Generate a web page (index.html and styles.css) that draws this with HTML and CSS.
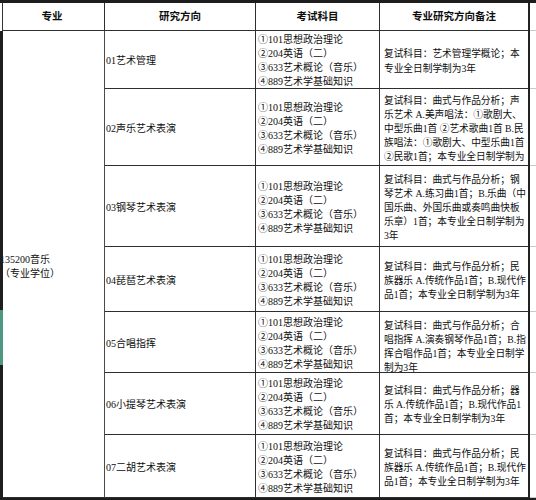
FILE: index.html
```html
<!DOCTYPE html>
<html lang="zh">
<head>
<meta charset="utf-8">
<title>专业研究方向</title>
<link rel="stylesheet" href="styles.css">
</head>
<body>
<div class="sheet">
  <div class="grid">
    <div class="cell head">专业</div>
    <div class="cell head">研究方向</div>
    <div class="cell head">考试科目</div>
    <div class="cell head c4">专业研究方向备注</div>
    <div class="ghost"></div>

    <div class="cell major"><span>135200音乐</span><span>（专业学位）</span></div>

    <div class="cell dir">01艺术管理</div>
    <div class="cell exam"><span>①101思想政治理论</span><span>②204英语（二）</span><span>③633艺术概论（音乐）</span><span>④889艺术学基础知识</span></div>
    <div class="cell note c4 loose"><span>复试科目：艺术管理学概论；本</span><span>专业全日制学制为3年</span></div>
    <div class="ghost"></div>

    <div class="cell dir">02声乐艺术表演</div>
    <div class="cell exam"><span>①101思想政治理论</span><span>②204英语（二）</span><span>③633艺术概论（音乐）</span><span>④889艺术学基础知识</span></div>
    <div class="cell note c4"><span>复试科目：曲式与作品分析；声</span><span>乐艺术 A.美声唱法：①歌剧大、</span><span>中型乐曲1首 ②艺术歌曲1首 B.民</span><span>族唱法：①歌剧大、中型乐曲1首</span><span>②民歌1首；本专业全日制学制为</span></div>
    <div class="ghost"></div>

    <div class="cell dir">03钢琴艺术表演</div>
    <div class="cell exam"><span>①101思想政治理论</span><span>②204英语（二）</span><span>③633艺术概论（音乐）</span><span>④889艺术学基础知识</span></div>
    <div class="cell note c4"><span>复试科目：曲式与作品分析；钢</span><span>琴艺术 A.练习曲1首；B.乐曲（中</span><span>国乐曲、外国乐曲或奏鸣曲快板</span><span>乐章）1首；本专业全日制学制为</span><span>3年</span></div>
    <div class="ghost"></div>

    <div class="cell dir">04琵琶艺术表演</div>
    <div class="cell exam"><span>①101思想政治理论</span><span>②204英语（二）</span><span>③633艺术概论（音乐）</span><span>④889艺术学基础知识</span></div>
    <div class="cell note c4"><span>复试科目：曲式与作品分析；民</span><span>族器乐 A.传统作品1首；B.现代作</span><span>品1首；本专业全日制学制为3年</span></div>
    <div class="ghost"></div>

    <div class="cell dir">05合唱指挥</div>
    <div class="cell exam"><span>①101思想政治理论</span><span>②204英语（二）</span><span>③633艺术概论（音乐）</span><span>④889艺术学基础知识</span></div>
    <div class="cell note c4 low"><span>复试科目：曲式与作品分析；合</span><span>唱指挥 A.演奏钢琴作品1首；B.指</span><span>挥合唱作品1首；本专业全日制学</span><span>制为3年</span></div>
    <div class="ghost"></div>

    <div class="cell dir">06小提琴艺术表演</div>
    <div class="cell exam"><span>①101思想政治理论</span><span>②204英语（二）</span><span>③633艺术概论（音乐）</span><span>④889艺术学基础知识</span></div>
    <div class="cell note c4"><span>复试科目：曲式与作品分析；器</span><span>乐 A.传统作品1首；B.现代作品1</span><span>首；本专业全日制学制为3年</span></div>
    <div class="ghost"></div>

    <div class="cell dir">07二胡艺术表演</div>
    <div class="cell exam"><span>①101思想政治理论</span><span>②204英语（二）</span><span>③633艺术概论（音乐）</span><span>④889艺术学基础知识</span></div>
    <div class="cell note c4"><span>复试科目：曲式与作品分析；民</span><span>族器乐 A.传统作品1首；B.现代作</span><span>品1首；本专业全日制学制为3年</span></div>
    <div class="ghost"></div>
  </div>
  <div class="strip">
    <div class="strip-head"></div>
    <div class="strip-dark top"></div>
    <div class="strip-teal"></div>
    <div class="strip-dark rest"></div>
  </div>
</div>
</body>
</html>
```
FILE: styles.css
```css
* {
  box-sizing: border-box;
  margin: 0;
  padding: 0;
}

body {
  margin: 0;
  background: #fff;
}

.sheet {
  position: relative;
  width: 536px;
  height: 500px;
  overflow: hidden;
  background: #fff;
  color: #0e0e0e;
  font-family: "Liberation Serif", "Noto Sans CJK SC", serif;
  font-size: 10px;
  line-height: 14px;
}

.grid {
  display: grid;
  grid-template-columns: 105px 151px 124px 150px 6px;
  grid-template-rows: 28px 58px 77px 81px 65px 61px 62px 63px;
  border-top: 3px solid #1d1d1d;
  border-bottom: 2px solid #1d1d1d;
}

.cell {
  display: flex;
  flex-direction: column;
  justify-content: center;
  overflow: hidden;
  white-space: nowrap;
  padding-top: 3px;
  border-right: 1px solid #2e2e2e;
  border-bottom: 1px solid #2e2e2e;
}

.cell.c4 {
  border-right: 2px solid #222;
}

.head {
  align-items: center;
  padding-top: 0;
  font-weight: 700;
  font-size: 10.5px;
}

.major {
  grid-column: 1;
  grid-row: 2 / 9;
  padding-top: 5px;
  border-right-color: #4a4a4a;
}

.dir {
  padding-left: 1px;
}

.exam {
  padding-left: 2px;
}

.note {
  padding-left: 4px;
  font-size: 9.7px;
}

.note.loose {
  line-height: 15.5px;
}

.note.low {
  padding-top: 9px;
}

.ghost {
  border-bottom: 1px solid #c9c9c9;
}

.strip {
  position: absolute;
  left: 0;
  top: 3px;
  width: 3px;
  height: 497px;
  display: flex;
  flex-direction: column;
}

.strip-head {
  height: 28px;
  background: #fff;
  border-right: 1px solid #333;
}

.strip-dark {
  background: #1e1e1e;
}

.strip-dark.top {
  height: 279px;
}

.strip-dark.rest {
  flex: 1;
}

.strip-teal {
  height: 55px;
  background: #4d9883;
}
```
